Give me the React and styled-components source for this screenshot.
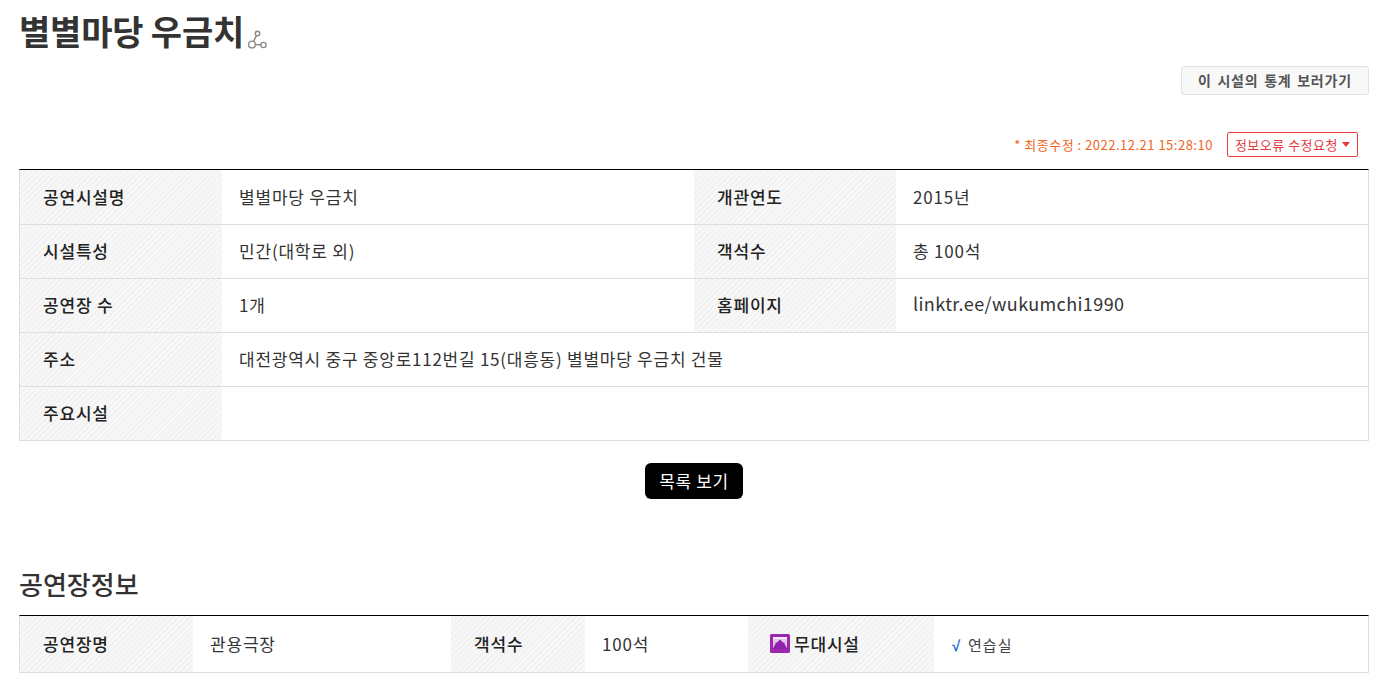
import styled, { createGlobalStyle } from 'styled-components';

const GlobalStyle = createGlobalStyle`
  html, body {
    margin: 0;
    padding: 0;
    background: #fff;
  }
  body {
    font-family: 'Noto Sans CJK KR', 'Noto Sans', sans-serif;
    color: #333;
    overflow: hidden;
  }
`;

const facilityRows = [
  ['공연시설명', '별별마당 우금치', '개관연도', '2015년'],
  ['시설특성', '민간(대학로 외)', '객석수', '총 100석'],
  ['공연장 수', '1개', '홈페이지', 'linktr.ee/wukumchi1990'],
];

export default function App() {
  return (
    <Page>
      <GlobalStyle />
      <TitleRow>
        <Title>별별마당 우금치</Title>
        <ShareIcon />
      </TitleRow>

      <StatsRow>
        <StatsButton>이 시설의 통계 보러가기</StatsButton>
      </StatsRow>

      <UpdateRow>
        <UpdatedAt>* 최종수정 : 2022.12.21 15:28:10</UpdatedAt>
        <ReportButton>
          정보오류 수정요청
          <Caret />
        </ReportButton>
      </UpdateRow>

      <InfoTable $firstRow={55}>
        <colgroup>
          <col width="202" />
          <col width="472" />
          <col width="202" />
          <col />
        </colgroup>
        <tbody>
          {facilityRows.map((row) => (
            <tr key={row[0]}>
              <Th>{row[0]}</Th>
              <Td>{row[1]}</Td>
              <Th>{row[2]}</Th>
              <Td $link={row[3].startsWith('linktr')}>{row[3]}</Td>
            </tr>
          ))}
          <tr>
            <Th>주소</Th>
            <Td $tight colSpan={3}>대전광역시 중구 중앙로112번길 15(대흥동) 별별마당 우금치 건물</Td>
          </tr>
          <tr>
            <Th>주요시설</Th>
            <Td colSpan={3} />
          </tr>
        </tbody>
      </InfoTable>

      <ListRow>
        <ListButton>목록 보기</ListButton>
      </ListRow>

      <SectionTitle>공연장정보</SectionTitle>

      <InfoTable $firstRow={57}>
        <colgroup>
          <col width="173" />
          <col width="258" />
          <col width="134" />
          <col width="163" />
          <col width="186" />
          <col />
        </colgroup>
        <tbody>
          <tr>
            <Th>공연장명</Th>
            <Td>관용극장</Td>
            <Th>객석수</Th>
            <Td>100석</Td>
            <StageTh>
              <StageLabel>
                <StageIcon />
                무대시설
              </StageLabel>
            </StageTh>
            <Td>
              <Check>√</Check>
              <Amenity>연습실</Amenity>
            </Td>
          </tr>
        </tbody>
      </InfoTable>
    </Page>
  );
}

function ShareIcon() {
  return (
    <IconSvg width="22" height="22" viewBox="0 0 22 22" fill="none" stroke="#8a8a8a" strokeWidth="1.4">
      <circle cx="9.5" cy="3.5" r="2.3" />
      <circle cx="4" cy="14.5" r="3.4" />
      <circle cx="15.5" cy="15" r="2.6" />
      <path d="M8.4 5.6 5.6 11.4M7.4 14.8h5.5" />
    </IconSvg>
  );
}

function StageIcon() {
  return (
    <svg width="20" height="19" viewBox="0 0 20 19">
      <rect width="20" height="19" rx="1.5" fill="#9c27b0" />
      <path d="M3 3h14v11h-3V9H6v5H3z" fill="#e6c5ec" />
      <path d="M3 3h14v2H3z" fill="#f7ecf9" />
      <path d="M10 5.5l3 3h1.5v1.5l2 3V15H3.5v-2l2-3V8.5H7z" fill="#8e24aa" />
    </svg>
  );
}

const Page = styled.div`
  width: 1388px;
  height: 686px;
  box-sizing: border-box;
  padding: 0 19px;
  overflow: hidden;
`;

const TitleRow = styled.div`
  display: flex;
  align-items: flex-end;
  height: 66px;
  padding-bottom: 11px;
  box-sizing: border-box;
`;

const Title = styled.h1`
  margin: 0;
  font-size: 34px;
  line-height: 48px;
  font-weight: 700;
  color: #333;
  letter-spacing: -0.2px;
`;

const IconSvg = styled.svg`
  margin: 0 0 3px 4px;
`;

const StatsRow = styled.div`
  display: flex;
  justify-content: flex-end;
`;

const StatsButton = styled.button`
  width: 188px;
  height: 29px;
  padding: 0 0 2px;
  background: #f8f8f8;
  border: 1px solid #e2e2e2;
  border-radius: 3px;
  font-family: inherit;
  font-size: 14px;
  font-weight: 700;
  color: #555;
  letter-spacing: 0.8px;
  word-spacing: 1.7px;
`;

const UpdateRow = styled.div`
  display: flex;
  justify-content: flex-end;
  align-items: center;
  gap: 14px;
  height: 25px;
  margin-top: 37px;
  padding-right: 11px;
`;

const UpdatedAt = styled.span`
  padding-bottom: 1px;
  font-size: 13px;
  letter-spacing: 0.5px;
  color: #f2641e;
`;

const ReportButton = styled.button`
  display: flex;
  align-items: center;
  gap: 4px;
  height: 25px;
  padding: 0 7px 0 7px;
  background: #fff;
  border: 1px solid #ee3a3a;
  border-radius: 2px;
  font-family: inherit;
  font-size: 13px;
  letter-spacing: 0.5px;
  color: #e8383d;
`;

const Caret = styled.span`
  width: 0;
  height: 0;
  border-left: 4.5px solid transparent;
  border-right: 4.5px solid transparent;
  border-top: 5px solid #e8383d;
`;

const InfoTable = styled.table`
  width: 1350px;
  margin-top: 12px;
  border-collapse: separate;
  border-spacing: 0;
  table-layout: fixed;
  border-top: 1px solid #000;
  border-left: 1px solid #ddd;
  border-right: 1px solid #ddd;

  tr:first-child > * {
    height: ${(p) => p.$firstRow}px;
  }
`;

const Th = styled.th`
  height: 54px;
  padding: 0 0 2px 23px;
  box-sizing: border-box;
  text-align: left;
  font-size: 17px;
  font-weight: 500;
  letter-spacing: 0.8px;
  color: #222;
  border-bottom: 1px solid #ddd;
  background: repeating-linear-gradient(135deg, #f2f2f2 0 2px, #f8f8f8 2px 4px);
`;

const StageTh = styled(Th)`
  padding-left: 22px;
`;

const Td = styled.td`
  height: 54px;
  padding: 0 0 ${(p) => (p.$link ? '5px' : '2px')} 17px;
  box-sizing: border-box;
  font-size: ${(p) => (p.$link ? '18px' : '17px')};
  letter-spacing: ${(p) => (p.$link ? '0.4px' : p.$tight ? '0.75px' : '0.8px')};
  color: #333;
  border-bottom: 1px solid #ddd;
`;

const ListRow = styled.div`
  display: flex;
  justify-content: center;
  margin-top: 22px;
`;

const ListButton = styled.button`
  width: 98px;
  height: 36px;
  padding: 0 0 2px;
  background: #000;
  border: none;
  border-radius: 6px;
  font-family: inherit;
  font-size: 17px;
  font-weight: 400;
  letter-spacing: 0.6px;
  color: #fff;
`;

const SectionTitle = styled.h2`
  margin: 66px 0 0;
  font-size: 26px;
  line-height: 38px;
  font-weight: 500;
  color: #333;
`;

const StageLabel = styled.span`
  display: flex;
  align-items: center;
  gap: 4px;
`;

const Check = styled.span`
  margin: 0 7px 0 1px;
  font-family: 'Liberation Sans', sans-serif;
  font-size: 15px;
  font-weight: 700;
  color: #1e6fd9;
`;

const Amenity = styled.span`
  font-size: 15px;
  letter-spacing: 1px;
  color: #444;
`;
